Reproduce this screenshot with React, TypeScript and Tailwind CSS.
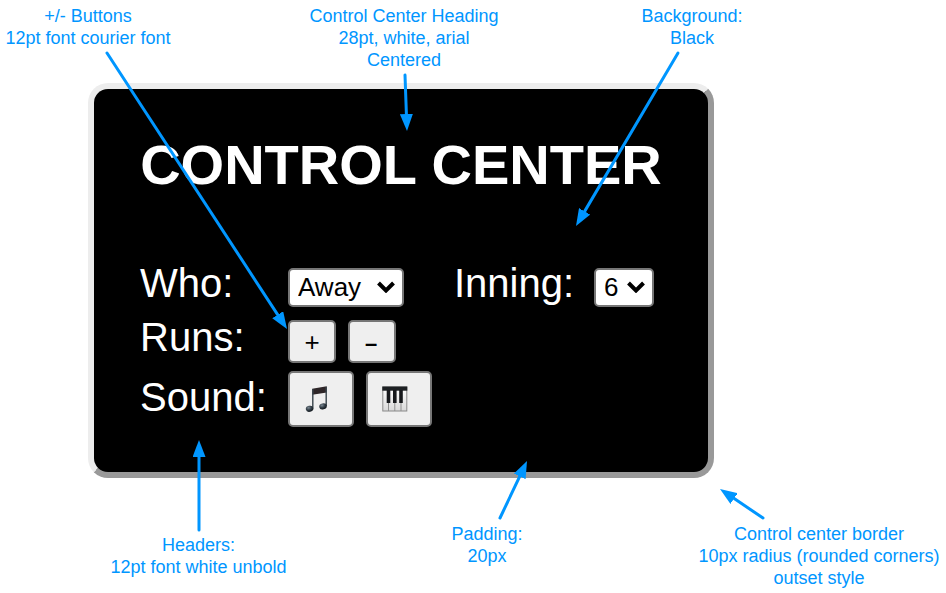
import { useState } from "react";
import type { ReactNode } from "react";

type NoteProps = { lines: string[]; className?: string };

function Note({ lines, className = "" }: NoteProps) {
  return (
    <p className={`text-center text-[18px] leading-[22px] whitespace-nowrap text-[#0096ff] ${className}`}>
      {lines.map((line) => (
        <span key={line} className="block">
          {line}
        </span>
      ))}
    </p>
  );
}

type PickerProps = {
  id: string;
  value: string;
  options: string[];
  onChange: (value: string) => void;
  className: string;
};

function Picker({ id, value, options, onChange, className }: PickerProps) {
  return (
    <div className={`relative h-[39px] ${className}`}>
      <select
        id={id}
        value={value}
        onChange={(event) => onChange(event.target.value)}
        className="block h-full w-full appearance-none rounded-[5px] border-2 border-[#767676] bg-white pl-2 pb-0.5 text-[26px] leading-[30px] text-black"
      >
        {options.map((option) => (
          <option key={option}>{option}</option>
        ))}
      </select>
      <svg
        viewBox="0 0 18 12"
        className="pointer-events-none absolute top-[13px] right-[9px] h-3 w-[18px]"
        aria-hidden="true"
      >
        <path d="M1.5 2 L9 9.5 L16.5 2" fill="none" stroke="#000" strokeWidth="4" />
      </svg>
    </div>
  );
}

type PadButtonProps = { label: string; onClick?: () => void; className: string; children: ReactNode };

function PadButton({ label, onClick, className, children }: PadButtonProps) {
  return (
    <button
      type="button"
      aria-label={label}
      onClick={onClick}
      className={`flex items-center rounded-[5px] border-2 border-[#767676] bg-[#efefef] text-black ${className}`}
    >
      {children}
    </button>
  );
}

function MusicIcon() {
  return (
    <svg viewBox="0 0 26 26" className="h-[26px] w-[26px]" aria-hidden="true">
      <defs>
        <radialGradient id="note-head" cx="0.4" cy="0.3" r="0.7">
          <stop offset="0" stopColor="#7d8a94" />
          <stop offset="0.5" stopColor="#36414a" />
          <stop offset="1" stopColor="#10161b" />
        </radialGradient>
      </defs>
      <path d="M8.2 2.8 L22.8 0.2 V6.6 L8.2 8.8 Z" fill="#2e2628" />
      <path d="M8.8 3 V22.5 M22.2 1 V20" fill="none" stroke="#39444c" strokeWidth="1.4" />
      <ellipse cx="5.6" cy="22.8" rx="3.8" ry="3" fill="url(#note-head)" transform="rotate(-12 5.6 22.8)" />
      <ellipse cx="19" cy="20.4" rx="3.8" ry="3" fill="url(#note-head)" transform="rotate(-12 19 20.4)" />
    </svg>
  );
}

function PianoIcon() {
  return (
    <svg viewBox="0 0 26 26" className="h-[26px] w-[26px]" aria-hidden="true">
      <defs>
        <linearGradient id="piano-keys" x1="0" y1="0" x2="0" y2="1">
          <stop offset="0" stopColor="#ffffff" />
          <stop offset="1" stopColor="#d9d9d9" />
        </linearGradient>
      </defs>
      <rect x="0.8" y="1" width="24" height="24" fill="url(#piano-keys)" stroke="#8a8a8a" strokeWidth="1" />
      <path d="M6.5 4 V25 M12.8 4 V25 M19 4 V25" stroke="#8f8f8f" strokeWidth="1" />
      <rect x="0.3" y="0.5" width="25" height="4.2" fill="#1d2023" />
      <path d="M6.5 4 V17 M12.8 4 V17 M19 4 V17" stroke="#17191c" strokeWidth="3.6" />
    </svg>
  );
}

const arrows = [
  { x1: 107, y1: 53, x2: 287, y2: 329 },
  { x1: 405, y1: 75, x2: 407, y2: 131 },
  { x1: 678, y1: 53, x2: 576, y2: 226 },
  { x1: 199, y1: 530, x2: 199, y2: 440 },
  { x1: 500, y1: 518, x2: 527, y2: 461 },
  { x1: 763, y1: 518, x2: 720, y2: 489 },
];

function Arrows() {
  return (
    <svg viewBox="0 0 946 593" className="pointer-events-none absolute top-0 left-0 w-full" aria-hidden="true">
      <defs>
        <marker
          id="arrow-head"
          markerUnits="userSpaceOnUse"
          markerWidth="17"
          markerHeight="13"
          refX="17"
          refY="6.5"
          orient="auto"
        >
          <path d="M0 0 L17 6.5 L0 13 Z" fill="#0096ff" />
        </marker>
      </defs>
      {arrows.map(({ x1, y1, x2, y2 }) => {
        const length = Math.hypot(x2 - x1, y2 - y1);
        const dx = (x2 - x1) / length;
        const dy = (y2 - y1) / length;
        return (
          <g key={`${x1}-${y1}`}>
            <line
              x1={x1}
              y1={y1}
              x2={x2 - dx * 10}
              y2={y2 - dy * 10}
              stroke="#0096ff"
              strokeWidth="3"
              strokeLinecap="round"
            />
            <line x1={x1} y1={y1} x2={x2} y2={y2} stroke="none" markerEnd="url(#arrow-head)" />
          </g>
        );
      })}
    </svg>
  );
}

export default function App() {
  const [team, setTeam] = useState("Away");
  const [inning, setInning] = useState("6");
  const [, setRuns] = useState(0);

  return (
    <main className="relative bg-white pt-[5px] font-['Liberation_Sans',Arial,sans-serif]">
      <header className="grid grid-cols-[176fr_456fr_120fr_194fr]">
        <Note lines={["+/- Buttons", "12pt font courier font"]} />
        <Note lines={["Control Center Heading", "28pt, white, arial", "Centered"]} />
        <Note lines={["Background:", "Black"]} />
      </header>

      <section className="mt-3 ml-[88px] max-w-[626px] rounded-[20px] border-6 border-t-[#ededed] border-r-[#999999] border-b-[#999999] border-l-[#ededed] bg-black px-[46px] pt-11 pb-[45px] text-white">
        <h1 className="text-center text-[56px] leading-[64px] font-bold whitespace-nowrap">CONTROL CENTER</h1>

        <div className="mt-[62px] grid grid-cols-[148px_166px_140px_60px] items-end text-[40px] leading-[48px]">
          <label htmlFor="who">Who:</label>
          <Picker id="who" value={team} options={["Away", "Home"]} onChange={setTeam} className="w-[116px]" />
          <label htmlFor="inning">Inning:</label>
          <Picker
            id="inning"
            value={inning}
            options={["1", "2", "3", "4", "5", "6", "7", "8", "9"]}
            onChange={setInning}
            className="w-[60px]"
          />
        </div>

        <div className="mt-1.5 grid grid-cols-[148px_1fr] items-end text-[40px] leading-[48px]">
          <span className="pb-0.5">Runs:</span>
          <div className="flex gap-3 leading-[30px]">
            <PadButton
              label="Add run"
              onClick={() => setRuns((n) => n + 1)}
              className="h-[43px] w-12 justify-center text-[26px]"
            >
              +
            </PadButton>
            <PadButton
              label="Remove run"
              onClick={() => setRuns((n) => n - 1)}
              className="h-[43px] w-12 justify-center pt-1 pr-0.5 text-[22px] font-bold"
            >
              –
            </PadButton>
          </div>
        </div>

        <div className="mt-2 grid grid-cols-[148px_1fr] items-end text-[40px] leading-[48px]">
          <span className="pb-1.5">Sound:</span>
          <div className="flex gap-3">
            <PadButton label="Play music" className="h-14 w-[66px] pl-3.5">
              <MusicIcon />
            </PadButton>
            <PadButton label="Play piano" className="h-14 w-[66px] pl-3.5">
              <PianoIcon />
            </PadButton>
          </div>
        </div>
      </section>

      <footer className="mt-[45px] grid grid-cols-[397fr_180fr_115fr_254fr] pb-1">
        <Note lines={["Headers:", "12pt font white unbold"]} className="pt-[11px]" />
        <Note lines={["Padding:", "20px"]} />
        <Note
          lines={["Control center border", "10px radius (rounded corners)", "outset style"]}
          className="col-start-4"
        />
      </footer>

      <Arrows />
    </main>
  );
}
